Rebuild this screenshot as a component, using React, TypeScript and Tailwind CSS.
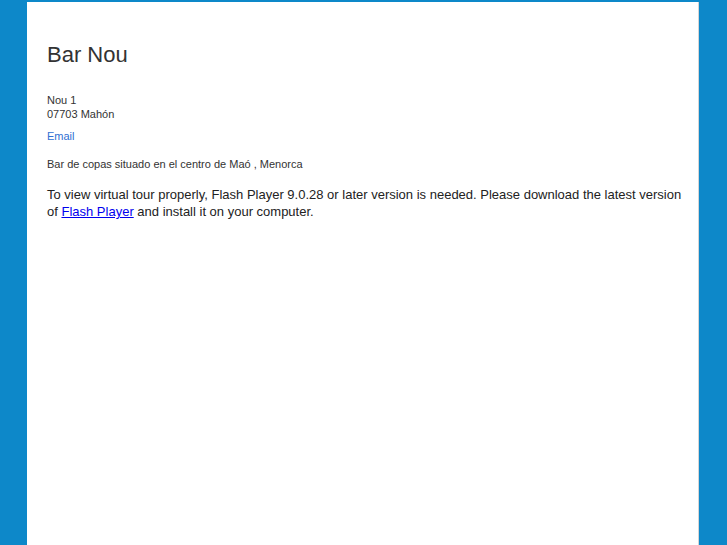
export default function App() {
  return (
    <div className="min-h-screen w-full bg-[#0d88c9] pt-[2px] font-['Liberation_Sans',Arial,sans-serif]">
      <div className="ml-[27px] min-h-[543px] w-[672px] border-r border-[#d5d5d5] bg-white pl-5 pr-3 pt-[40px] text-[#333]">
        <h1 className="text-[22px] leading-[26px]">Bar Nou</h1>
        <div className="mt-[25px] text-[11px] leading-[14px]">
          <p>Nou 1</p>
          <p>07703 Mahón</p>
        </div>
        <p className="mt-2 text-[11px] leading-[14px]">
          <a href="#" className="text-[#2f6fd2]">
            Email
          </a>
        </p>
        <p className="mt-[14px] text-[11px] leading-[14px]">
          Bar de copas situado en el centro de Maó , Menorca
        </p>
        <p className="mt-[15px] text-[13px] leading-[17px] text-[#222]">
          To view virtual tour properly, Flash Player 9.0.28 or later version is needed. Please download the latest version of{" "}
          <a href="#" className="text-[#0000ee] underline">
            Flash Player
          </a>{" "}
          and install it on your computer.
        </p>
      </div>
    </div>
  );
}
